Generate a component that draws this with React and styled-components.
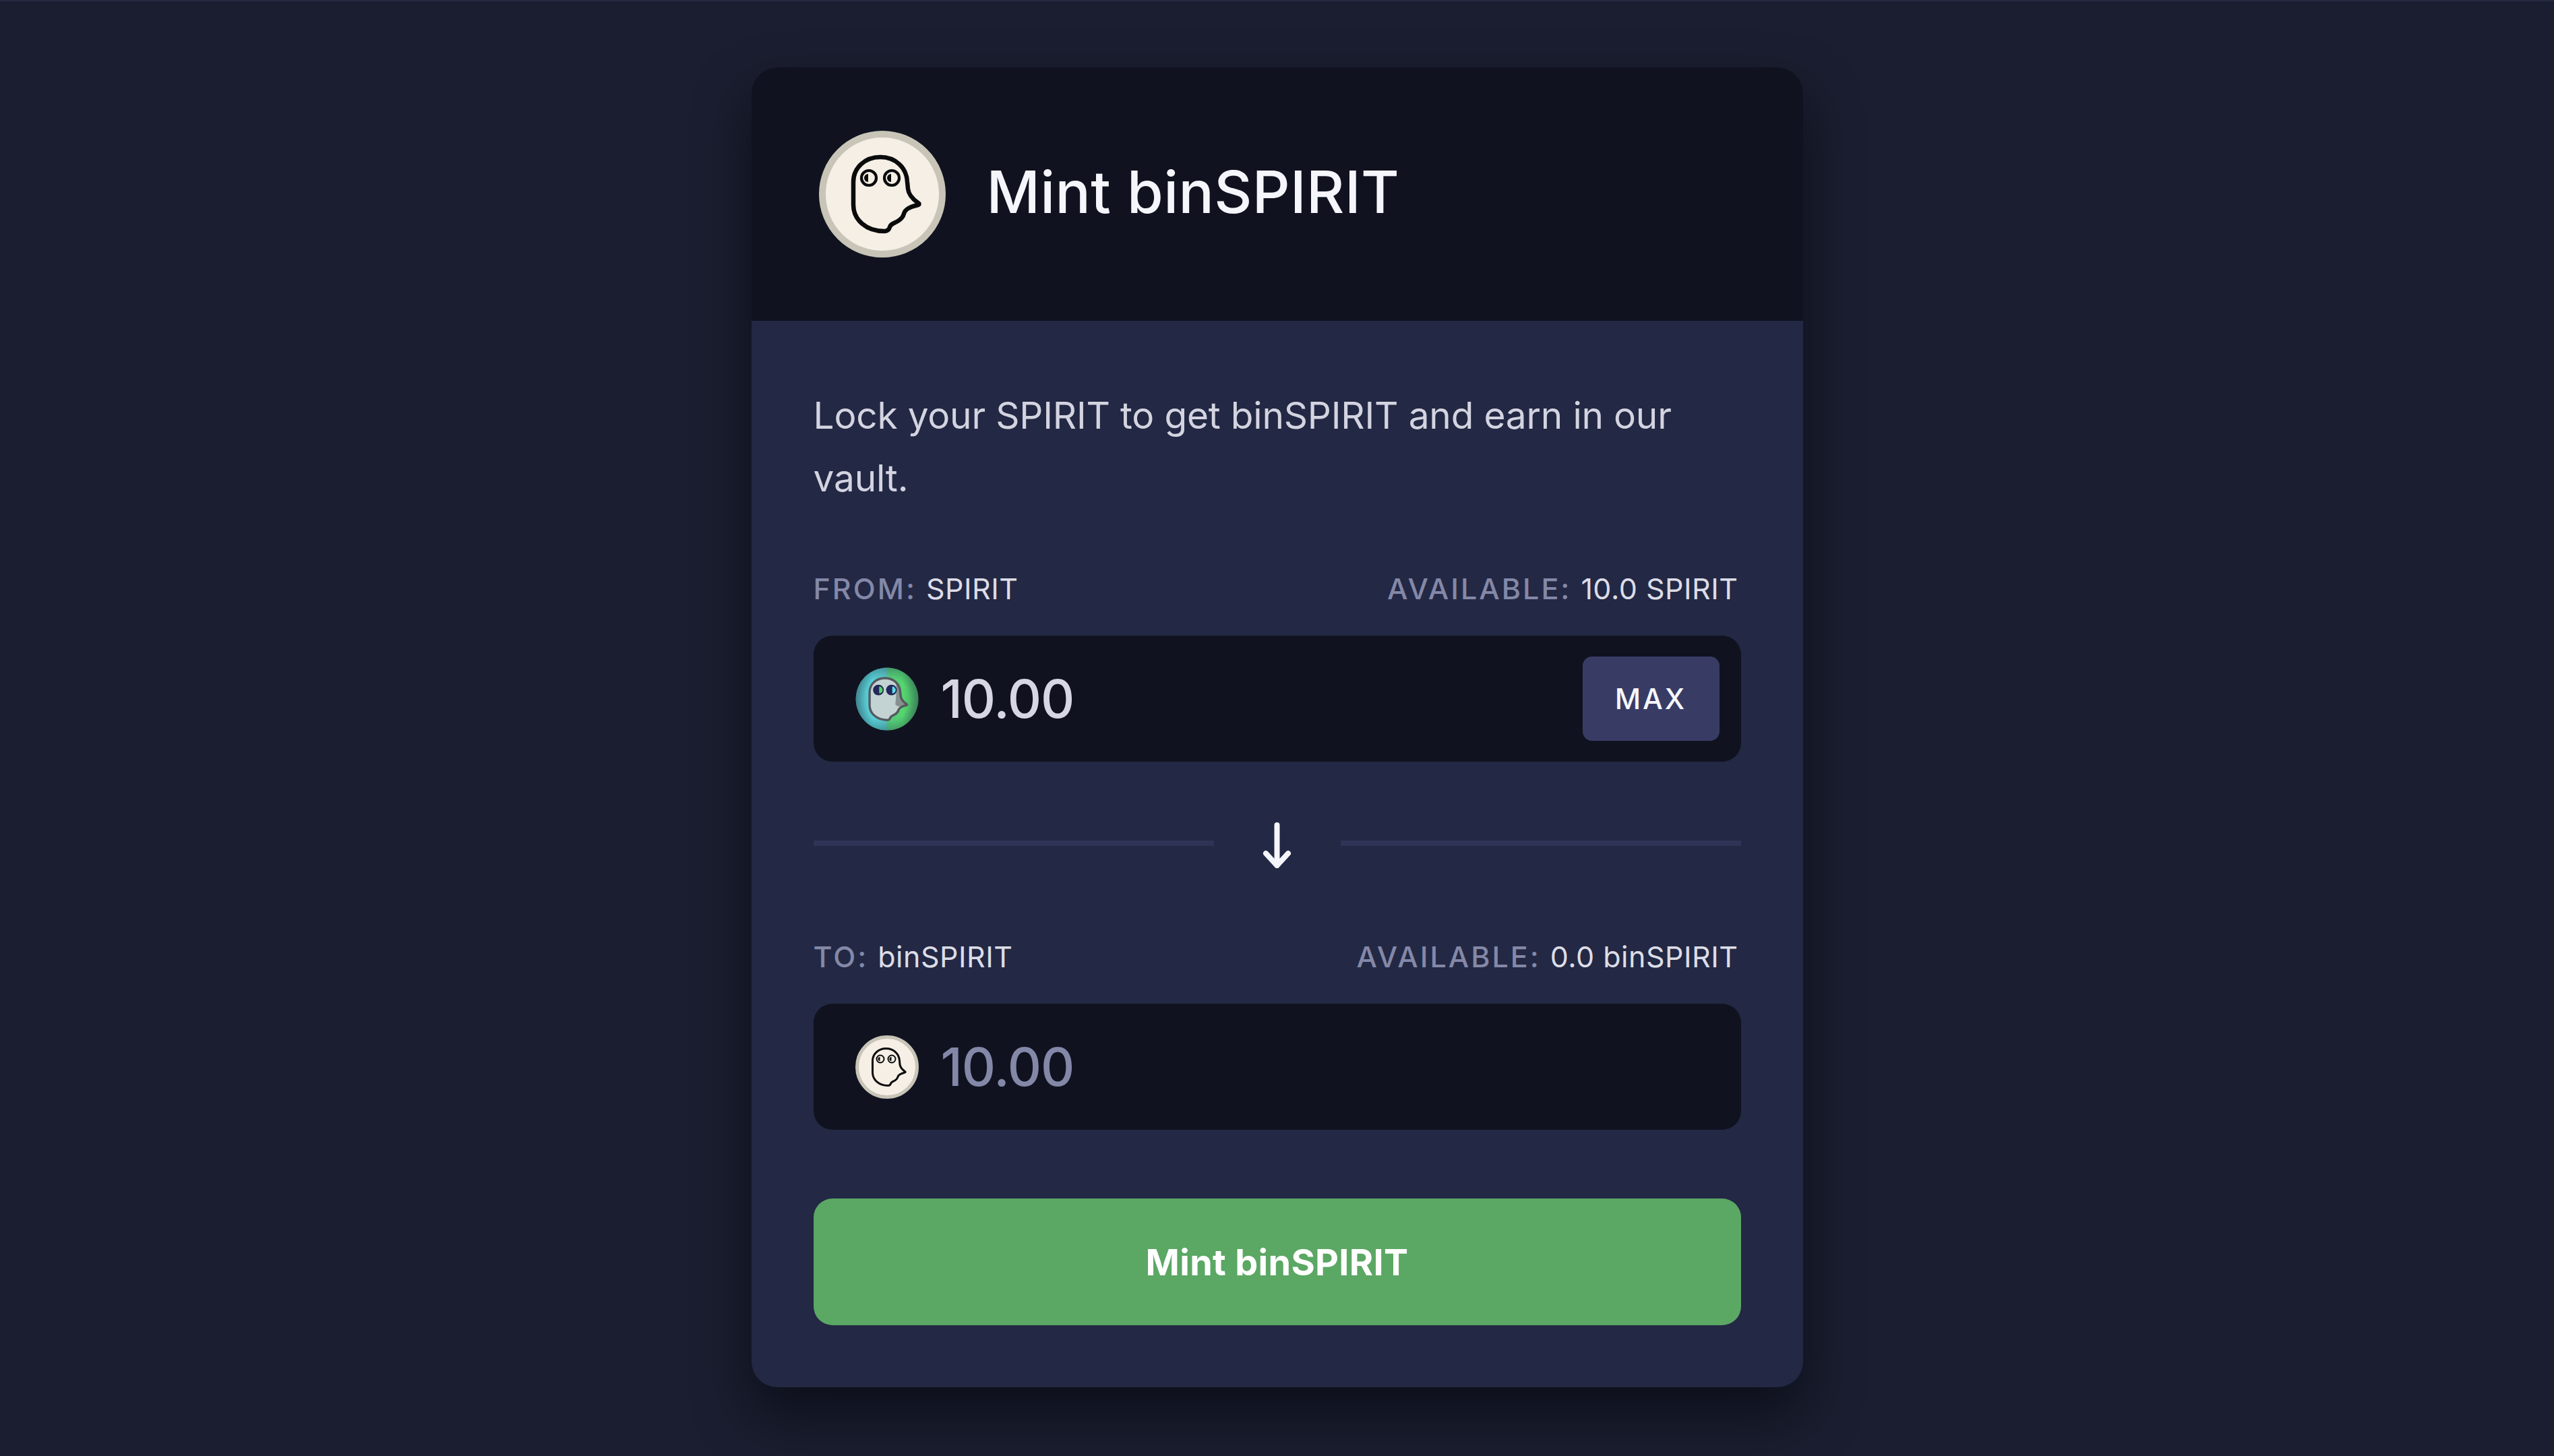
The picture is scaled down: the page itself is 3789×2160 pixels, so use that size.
import React from "react";
import styled, { createGlobalStyle } from "styled-components";

const Global = createGlobalStyle`
  html, body { margin: 0; padding: 0; background: #1a1e30; }
  body { font-family: "Inter", "Noto Sans", sans-serif; }
`;

const Page = styled.main`
  width: 3789px;
  height: 2160px;
  display: flex;
  justify-content: center;
  padding-top: 98px;
  box-sizing: border-box;
  background: #1a1e30;
  border-top: 2px solid #262a40;
  overflow: hidden;
`;

const Card = styled.section`
  width: 1560px;
  height: 1958px;
  border-radius: 38px;
  background: #232844;
  box-shadow: 0 40px 80px rgba(5, 6, 12, 0.6);
  overflow: hidden;
  display: flex;
  flex-direction: column;
`;

const Header = styled.header`
  height: 376px;
  flex: none;
  background: #10131f;
  display: flex;
  align-items: center;
  gap: 61px;
  padding: 0 0 0 100px;
`;

const Title = styled.h1`
  margin: 0 0 7px;
  font-size: 87px;
  font-weight: 500;
  letter-spacing: 0.4px;
  color: #f5f6fc;
  line-height: 1;
`;

const Body = styled.div`
  padding: 94px 92px 0;
  display: flex;
  flex-direction: column;
`;

const Intro = styled.p`
  margin: 0;
  font-size: 55px;
  line-height: 93px;
  letter-spacing: -0.2px;
  color: #d3d4e0;
  height: 186px;
`;

const Labels = styled.div`
  display: flex;
  justify-content: space-between;
  align-items: center;
  height: 60px;
  font-size: 43px;
  padding-right: 4px;
  margin-top: ${(p) => p.$top}px;
`;

const Label = styled.span`
  display: flex;
  gap: 14px;
`;

const Muted = styled.span`
  color: #8488a8;
  font-weight: 500;
  letter-spacing: 3px;
`;

const Value = styled.span`
  color: #dcdde7;
  letter-spacing: 0.5px;
`;

const Field = styled.div`
  height: 187px;
  margin-top: 40px;
  border-radius: 28px;
  background: #10131f;
  display: flex;
  align-items: center;
  padding: 0 32px 0 62px;
  gap: 33px;
`;

const Amount = styled.span`
  flex: 1;
  font-size: 78px;
  font-weight: 500;
  letter-spacing: -1px;
  color: ${(p) => p.$color};
`;

const MaxButton = styled.button`
  width: 203px;
  height: 125px;
  border: 0;
  border-radius: 14px;
  background: #383c65;
  color: #f5f6fc;
  font: 500 42px "Inter", sans-serif;
  letter-spacing: 3px;
  padding: 0;
`;

const Divider = styled.div`
  height: 100px;
  margin-top: 71px;
  display: flex;
  align-items: center;
`;

const Rule = styled.div`
  flex: 1;
  height: 8px;
  background: #2f3356;
`;

const ArrowBox = styled.div`
  width: 188px;
  padding-top: 5px;
  display: flex;
  justify-content: center;
  align-items: center;
`;

const Submit = styled.button`
  margin-top: 102px;
  height: 188px;
  border: 0;
  border-radius: 28px;
  background: #5ba764;
  color: #fff;
  font: 700 54px "Inter", sans-serif;
  letter-spacing: 0.3px;
  padding: 0;
`;

const GHOST = "M91 39 C68 39 51 55 51 76 L51 110 C51 132 70 149 97 149 C102 149 104 146 105 143 C106 138 112 137 117 134 C122 131 125 127 126 123 C128 116 135 113 147 110 C149 109.5 149 108 147 107 C140 102 133 96 132 86 L131 76 C130 55 114 39 91 39 Z";

const BinLogo = ({ size, ring }) => (
  <svg width={size} height={size} viewBox="0 0 188 188" style={{ flex: "none" }}>
    <circle cx="94" cy="94" r="89" fill="#f5efe5" stroke="#c8c5b8" strokeWidth="10" />
    <path d={GHOST} fill="none" stroke="#0b0b0c" strokeWidth={ring} strokeLinejoin="round" />
    <circle cx="74" cy="70" r="11" fill="none" stroke="#0b0b0c" strokeWidth={ring * 0.65} />
    <circle cx="108" cy="70" r="11" fill="none" stroke="#0b0b0c" strokeWidth={ring * 0.65} />
    <path d="M73 64 A6 6 0 0 0 73 76 Z" fill="#0b0b0c" />
    <path d="M107 64 A6 6 0 0 0 107 76 Z" fill="#0b0b0c" />
  </svg>
);

const SpiritLogo = () => (
  <svg width="94" height="94" viewBox="0 0 94 94" style={{ flex: "none" }}>
    <defs>
      <linearGradient id="spiritFill" x1="0" x2="1" y1="0" y2="0">
        <stop offset="0" stopColor="#4fa4ae" />
        <stop offset="0.26" stopColor="#5bd8e0" />
        <stop offset="0.48" stopColor="#56bcc0" />
        <stop offset="0.52" stopColor="#53c47c" />
        <stop offset="0.75" stopColor="#56d670" />
        <stop offset="1" stopColor="#459f62" />
      </linearGradient>
      <radialGradient id="spiritEdge">
        <stop offset="0.7" stopColor="#1c3a44" stopOpacity="0" />
        <stop offset="1" stopColor="#1c3a44" stopOpacity="0.3" />
      </radialGradient>
      <clipPath id="spiritBody">
        <path d={GHOST} />
      </clipPath>
    </defs>
    <circle cx="47" cy="47" r="46.5" fill="url(#spiritFill)" />
    <circle cx="47" cy="47" r="46.5" fill="url(#spiritEdge)" />
    <g transform="translate(-8 -6) scale(0.57 0.565)">
      <path d={GHOST} fill="#c3d2d3" />
      <g clipPath="url(#spiritBody)">
        <path d="M118 39 C122 60 120 90 118 108 C122 114 132 116 150 109 L135 60 Z" fill="#87918f" />
      </g>
      <path d={GHOST} fill="none" stroke="#55595e" strokeWidth="6" strokeLinejoin="round" />
      <circle cx="74" cy="70" r="14" fill="#23285a" />
      <circle cx="108" cy="70" r="14" fill="#23285a" />
      <path d="M76 61 A9 9 0 0 1 76 79 Z" fill="#56d66c" />
      <path d="M110 61 A9 9 0 0 1 110 79 Z" fill="#5bdde4" />
    </g>
  </svg>
);

const DownArrow = () => (
  <svg width="49" height="68" viewBox="0 0 49 68" fill="none" stroke="#f5f6fc" strokeWidth="8" strokeLinecap="round" strokeLinejoin="round">
    <path d="M24.5 4 V 64 M8 46 L24.5 64 L41 46" />
  </svg>
);

export default function App() {
  return (
    <>
      <Global />
      <Page>
        <Card>
          <Header>
            <BinLogo size={188} ring={6.5} />
            <Title>Mint binSPIRIT</Title>
          </Header>
          <Body>
            <Intro>Lock your SPIRIT to get binSPIRIT and earn in our vault.</Intro>
            <Labels $top={87}>
              <Label><Muted>FROM:</Muted><Value>SPIRIT</Value></Label>
              <Label><Muted>AVAILABLE:</Muted><Value>10.0 SPIRIT</Value></Label>
            </Labels>
            <Field>
              <SpiritLogo />
              <Amount $color="#d6d7e3">10.00</Amount>
              <MaxButton>MAX</MaxButton>
            </Field>
            <Divider>
              <Rule />
              <ArrowBox><DownArrow /></ArrowBox>
              <Rule />
            </Divider>
            <Labels $top={88}>
              <Label><Muted>TO:</Muted><Value>binSPIRIT</Value></Label>
              <Label><Muted>AVAILABLE:</Muted><Value>0.0 binSPIRIT</Value></Label>
            </Labels>
            <Field>
              <BinLogo size={94} ring={6} />
              <Amount $color="#8488a8">10.00</Amount>
            </Field>
            <Submit>Mint binSPIRIT</Submit>
          </Body>
        </Card>
      </Page>
    </>
  );
}
